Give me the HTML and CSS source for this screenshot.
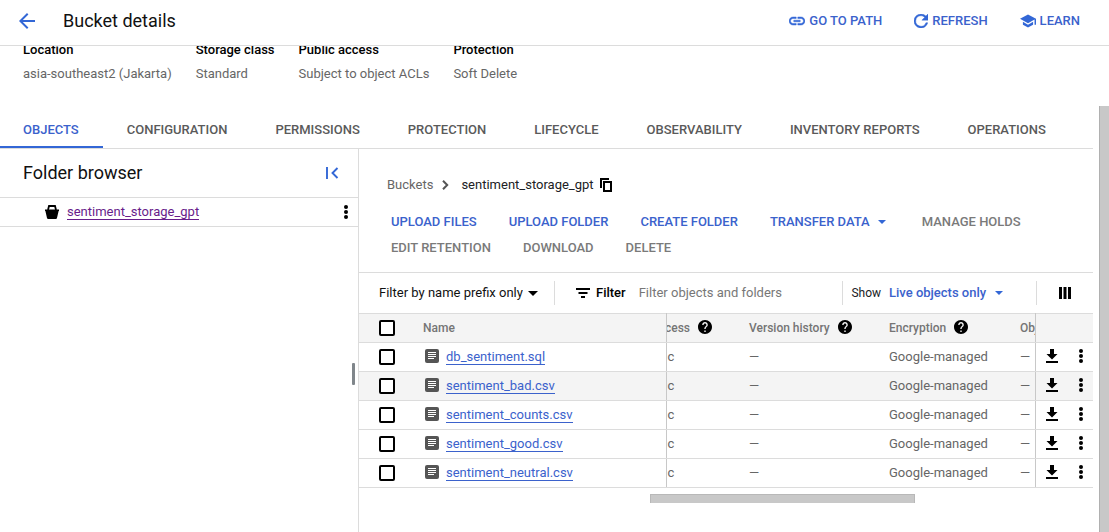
FILE: index.html
```html
<!DOCTYPE html>
<html lang="en">
<head>
<meta charset="utf-8">
<meta name="viewport" content="width=device-width, initial-scale=1">
<title>Bucket details</title>
<link rel="stylesheet" href="styles.css">
</head>
<body>
<svg class="sprite" aria-hidden="true">
  <symbol id="file" viewBox="0 0 14 14"><rect width="14" height="14" rx="2" fill="#555"/><path d="M3 3.500h8M3 5.500h8M3 7.500h8M3 9.500h6" stroke="#fff"/></symbol>
  <symbol id="download" viewBox="0 0 12 14"><path d="M4 0h4v5h3.500L6 10.500 .5 5H4zM0 12h12v2H0z"/></symbol>
  <symbol id="more" viewBox="0 0 4 14"><circle cx="2" cy="2" r="2"/><circle cx="2" cy="7" r="2"/><circle cx="2" cy="12" r="2"/></symbol>
  <symbol id="help" viewBox="2 2 20 20"><path d="M12 2C6.480 2 2 6.480 2 12s4.480 10 10 10 10-4.480 10-10S17.520 2 12 2zm1 17h-2v-2h2v2zm2.070-7.750-.9.920C13.450 12.900 13 13.500 13 15h-2v-.5c0-1.100.45-2.100 1.170-2.830l1.240-1.260c.37-.36.59-.86.59-1.410 0-1.100-.9-2-2-2s-2 .9-2 2H8c0-2.210 1.790-4 4-4s4 1.790 4 4c0 .88-.36 1.680-.93 2.250z"/></symbol>
  <symbol id="caret" viewBox="0 0 10 5"><path d="M0 0h10L5 5z"/></symbol>
</svg>
<header class="topbar">
  <button class="icon-btn blue" aria-label="Back"><svg width="16" height="16" viewBox="4 4 16 16"><path d="M20 11H7.830l5.590-5.590L12 4l-8 8 8 8 1.410-1.410L7.830 13H20z"/></svg></button>
  <h1>Bucket details</h1>
  <div class="top-actions">
    <button class="text-btn"><svg width="16" height="10" viewBox="2 6 20 12"><path d="M3.900 12c0-1.710 1.390-3.100 3.100-3.100h4V7H7c-2.760 0-5 2.240-5 5s2.240 5 5 5h4v-1.900H7c-1.710 0-3.100-1.390-3.100-3.100zM8 13h8v-2H8v2zm9-6h-4v1.900h4c1.710 0 3.100 1.390 3.100 3.100s-1.390 3.100-3.100 3.100h-4V17h4c2.760 0 5-2.240 5-5s-2.240-5-5-5z" stroke="#3367d6" stroke-width=".6"/></svg>GO TO PATH</button>
    <button class="text-btn"><svg width="14" height="14" viewBox="4 4 16 16"><path d="M17.650 6.350A7.960 7.960 0 0 0 12 4a8 8 0 1 0 7.730 10h-2.080A6 6 0 1 1 12 6c1.660 0 3.140.69 4.220 1.780L13 11h7V4z" stroke="#3367d6" stroke-width=".5"/></svg>REFRESH</button>
    <button class="text-btn"><svg width="16" height="14" viewBox="1 3 22 18"><path d="M5 13.180v4L12 21l7-3.820v-4L12 17zM12 3 1 9l11 6 9-4.910V17h2V9z"/></svg>LEARN</button>
  </div>
</header>
<div class="page">
<main class="content">
  <dl class="facts">
    <div><dt>Location</dt><dd>asia-southeast2 (Jakarta)</dd></div>
    <div><dt>Storage class</dt><dd>Standard</dd></div>
    <div><dt>Public access</dt><dd>Subject to object ACLs</dd></div>
    <div><dt>Protection</dt><dd>Soft Delete</dd></div>
  </dl>
  <nav class="tabs">
    <a href="#" class="active">OBJECTS</a><a href="#">CONFIGURATION</a><a href="#">PERMISSIONS</a><a href="#">PROTECTION</a><a href="#">LIFECYCLE</a><a href="#">OBSERVABILITY</a><a href="#">INVENTORY REPORTS</a><a href="#">OPERATIONS</a>
  </nav>
  <div class="split">
    <aside class="folders">
      <div class="folders-head"><h2>Folder browser</h2><button class="icon-btn blue" aria-label="Collapse"><svg width="13" height="12" viewBox="0 0 13 12"><path d="M1 0v12M11.500 1 6.500 6l5 5" fill="none" stroke="#3367d6" stroke-width="1.900"/></svg></button></div>
      <div class="folder-row"><svg width="14" height="14" viewBox="0 0 14 14"><path d="M3 5 4 1h6l1 4" fill="none" stroke="#000" stroke-width="1.800"/><path d="M0 4.500h14v1.500h-.4L12 13q-.2 1-1.200 1H3.200Q2.200 14 2 13L.4 6H0z"/></svg><a class="link visited" href="#">sentiment_storage_gpt</a><button class="icon-btn more" aria-label="More"><svg width="4" height="14"><use href="#more"/></svg></button></div>
      <div class="handle"></div>
    </aside>
    <section class="objects">
      <div class="crumbs"><a href="#">Buckets</a><svg width="7" height="10" viewBox="0 0 7 10"><path d="m1 .8 4.200 4.200L1 9.200" fill="none" stroke="#555" stroke-width="2"/></svg><span>sentiment_storage_gpt</span><button class="icon-btn" aria-label="Copy"><svg width="12" height="14" viewBox="0 0 12 14"><path d="M1 10V1h8" fill="none" stroke="#000" stroke-width="2"/><path d="M4 4h7v9H4z" fill="none" stroke="#000" stroke-width="2"/></svg></button></div>
      <div class="actions">
        <button class="text-btn">UPLOAD FILES</button><button class="text-btn">UPLOAD FOLDER</button><button class="text-btn">CREATE FOLDER</button><button class="text-btn menu">TRANSFER DATA<svg width="8" height="4"><use href="#caret"/></svg></button><button class="text-btn" disabled>MANAGE HOLDS</button><button class="text-btn" disabled>EDIT RETENTION</button><button class="text-btn" disabled>DOWNLOAD</button><button class="text-btn" disabled>DELETE</button>
      </div>
      <div class="filterbar">
        <div class="scope"><select aria-label="Filter scope"><option>Filter by name prefix only</option></select><svg width="10" height="5"><use href="#caret"/></svg></div>
        <div class="search"><svg width="14" height="10" viewBox="0 0 14 10"><path d="M0 1h14M2.500 5h9M5 9h4" stroke="#000" stroke-width="2"/></svg><label for="q">Filter</label><input id="q" type="text" placeholder="Filter objects and folders"></div>
        <div class="show"><label for="show">Show</label><select id="show"><option>Live objects only</option></select><svg width="8" height="4"><use href="#caret"/></svg></div>
        <button class="icon-btn columns" aria-label="Columns"><svg width="12" height="12"><path d="M0 0h3v12H0zM4.500 0h3v12h-3zM9 0h3v12H9z"/></svg></button>
      </div>
      <table class="grid">
        <colgroup><col class="c-check"><col><col class="c-access"><col class="c-version"><col class="c-enc"><col class="c-obj"><col class="c-act"></colgroup>
        <thead><tr><th><input type="checkbox" aria-label="Select all"></th><th>Name</th><th class="access"><div>Public access<svg width="14" height="14"><use href="#help"/></svg></div></th><th><div>Version history<svg width="14" height="14"><use href="#help"/></svg></div></th><th><div>Encryption<svg width="14" height="14"><use href="#help"/></svg></div></th><th class="clip">Object retention</th><th class="act"></th></tr></thead>
        <tbody>
          <tr><td><input type="checkbox" aria-label="Select db_sentiment.sql"></td><td><div class="name"><svg width="14" height="14"><use href="#file"/></svg><a class="link" href="#">db_sentiment.sql</a></div></td><td class="access">c</td><td>—</td><td>Google-managed</td><td>—</td><td class="act"><div><button class="icon-btn" aria-label="Download"><svg width="12" height="14"><use href="#download"/></svg></button><button class="icon-btn" aria-label="More"><svg width="4" height="14"><use href="#more"/></svg></button></div></td></tr>
          <tr class="hover"><td><input type="checkbox" aria-label="Select sentiment_bad.csv"></td><td><div class="name"><svg width="14" height="14"><use href="#file"/></svg><a class="link" href="#">sentiment_bad.csv</a></div></td><td class="access">c</td><td>—</td><td>Google-managed</td><td>—</td><td class="act"><div><button class="icon-btn" aria-label="Download"><svg width="12" height="14"><use href="#download"/></svg></button><button class="icon-btn" aria-label="More"><svg width="4" height="14"><use href="#more"/></svg></button></div></td></tr>
          <tr><td><input type="checkbox" aria-label="Select sentiment_counts.csv"></td><td><div class="name"><svg width="14" height="14"><use href="#file"/></svg><a class="link" href="#">sentiment_counts.csv</a></div></td><td class="access">c</td><td>—</td><td>Google-managed</td><td>—</td><td class="act"><div><button class="icon-btn" aria-label="Download"><svg width="12" height="14"><use href="#download"/></svg></button><button class="icon-btn" aria-label="More"><svg width="4" height="14"><use href="#more"/></svg></button></div></td></tr>
          <tr><td><input type="checkbox" aria-label="Select sentiment_good.csv"></td><td><div class="name"><svg width="14" height="14"><use href="#file"/></svg><a class="link" href="#">sentiment_good.csv</a></div></td><td class="access">c</td><td>—</td><td>Google-managed</td><td>—</td><td class="act"><div><button class="icon-btn" aria-label="Download"><svg width="12" height="14"><use href="#download"/></svg></button><button class="icon-btn" aria-label="More"><svg width="4" height="14"><use href="#more"/></svg></button></div></td></tr>
          <tr><td><input type="checkbox" aria-label="Select sentiment_neutral.csv"></td><td><div class="name"><svg width="14" height="14"><use href="#file"/></svg><a class="link" href="#">sentiment_neutral.csv</a></div></td><td class="access">c</td><td>—</td><td>Google-managed</td><td>—</td><td class="act"><div><button class="icon-btn" aria-label="Download"><svg width="12" height="14"><use href="#download"/></svg></button><button class="icon-btn" aria-label="More"><svg width="4" height="14"><use href="#more"/></svg></button></div></td></tr>
        </tbody>
      </table>
      <div class="hscroll"><div class="hthumb"></div></div>
    </section>
  </div>
</main>
<div class="vscroll"></div>
</div>
</body>
</html>
```
FILE: styles.css
```css
* { box-sizing: border-box; }
body {
  margin: 0;
  height: 100vh;
  display: flex;
  flex-direction: column;
  overflow: hidden;
  background: #fff;
  color: #202124;
  font: 13px/18px Roboto, sans-serif;
}
h1, h2, dl, dd { margin: 0; font-weight: 400; }
h1, h2 { font-size: 18px; line-height: 24px; color: #111; }
svg { display: block; flex: none; }
a { color: inherit; text-decoration: none; }
button, select, input { font: inherit; color: inherit; background: none; border: 0; padding: 0; margin: 0; outline: 0; }
select { appearance: none; }
.sprite { position: absolute; width: 0; height: 0; }
.icon-btn { display: flex; align-items: center; }
.blue { fill: #3367d6; }

.topbar {
  flex: none;
  height: 46px;
  display: flex;
  align-items: center;
  padding: 0 28px 4px 19px;
  border-bottom: 1px solid #dcdcdc;
}
.topbar h1 { margin-left: 28px; }
.top-actions { display: flex; gap: 32px; margin-left: auto; padding-right: 1px; }
.text-btn {
  display: flex;
  align-items: center;
  gap: 4px;
  color: #3b62cc;
  fill: #3367d6;
  font-weight: 500;
  line-height: 18px;
  white-space: nowrap;
}
.text-btn:disabled { color: #7a7a7a; }

.page { flex: 1; display: flex; min-height: 0; }
.content { flex: 1; min-width: 0; display: flex; flex-direction: column; }
.vscroll { flex: none; width: 10px; margin: 60px 0 0 6px; background: #c8c8c8; border-left: 1px solid #b0b0b0; }

.facts { display: flex; flex: none; gap: 24px; height: 65px; padding-left: 23px; overflow: hidden; }
.facts div { margin-top: -5px; }
.facts dt { font-weight: 500; color: #000; margin-bottom: 6px; }
.facts dd { color: #666; }

.tabs { display: flex; flex: none; height: 38px; border-bottom: 1px solid #dcdcdc; }
.tabs a { padding: 10px 24px 0; height: 37px; font-weight: 500; color: #5a5a5a; white-space: nowrap; }
.tabs a:first-child { padding-left: 23px; }
.tabs .active { color: #3b62cc; border-bottom: 2px solid #3367d6; }

.split { flex: 1; display: flex; min-height: 0; }
.folders { position: relative; flex: none; width: 359px; border-right: 1px solid #dcdcdc; }
.folders-head { display: flex; align-items: center; justify-content: space-between; height: 49px; padding: 0 19px 0 23px; border-bottom: 1px solid #dcdcdc; }
.folder-row { display: flex; align-items: center; height: 29px; padding: 0 10px 0 45px; border-bottom: 1px solid #dcdcdc; }
.folder-row .link { margin: 0 auto 0 8px; }
.handle { position: absolute; right: 3px; top: 214px; width: 3px; height: 22px; background: #80868b; border-radius: 1px; }
.link { color: #3b62cc; line-height: 15px; border-bottom: 1px solid #3b62cc; }
.visited { color: #681d8b; border-color: #681d8b; }

.objects { flex: 1; min-width: 0; }
.crumbs { display: flex; align-items: center; height: 18px; margin: 27px 28px 0; }
.crumbs a { color: #666; }
.crumbs svg { margin: 0 12px 0 9px; }
.crumbs button svg { margin: 0 0 0 6px; }
.actions { display: flex; flex-wrap: wrap; gap: 8px 32px; padding: 19px 32px 15px; border-bottom: 1px solid #dcdcdc; }
.menu { gap: 8px; padding-right: 4px; }
.filterbar { display: flex; align-items: center; height: 40px; padding: 0 22px 0 20px; }
.filterbar > * { height: 24px; display: flex; align-items: center; }
.scope { fill: #000; gap: 5px; padding-right: 16px; color: #111; }
.search { flex: 1; min-width: 0; border: solid #dcdcdc; border-width: 0 1px; padding-left: 21px; }
.search label { font-weight: 500; color: #000; margin: 0 13px 0 6px; }
.search input { flex: 1; min-width: 0; }
.search input::placeholder { color: #777; opacity: 1; }
.show { padding-left: 8px; fill: #3367d6; gap: 8px; }
.show label { font-size: 12px; }
.show select { font-weight: 500; color: #3b62cc; }
.columns { margin-left: 33px; border-left: 1px solid #dcdcdc; padding-left: 22px; }

.grid { width: 100%; table-layout: fixed; border-collapse: collapse; color: #666; border-top: 1px solid #dcdcdc; }
.grid th, .grid td { height: 29px; padding: 0 0 0 8px; text-align: left; vertical-align: middle; border-bottom: 1px solid #dcdcdc; white-space: nowrap; line-height: 16px; }
.grid th { font-size: 12px; font-weight: 500; color: #757575; }
.grid th:first-child, .grid td:first-child { padding-left: 20px; }
.grid thead tr, .grid .hover { background: #f4f4f4; }
.c-check { width: 56px; }
.c-access { width: 75px; }
.c-version { width: 140px; }
.c-enc { width: 131px; }
.c-obj { width: 23px; }
.c-act { width: 58px; }
.grid th div { display: flex; align-items: center; gap: 8px; fill: #000; }
.grid .access { border-left: 1px solid #c8c8c8; padding-left: 1px; overflow: hidden; }
.grid th.access { padding-left: 0; }
.grid th.access div { justify-content: flex-end; padding-right: 29px; overflow: hidden; }
.grid .clip { overflow: hidden; }
.grid .act { border-left: 1px solid #c8c8c8; padding: 0 10px; }
.act div { display: flex; justify-content: space-between; padding-bottom: 2px; }
.name { display: flex; align-items: center; gap: 7px; padding-left: 2px; }
.name svg, .grid th svg { margin-bottom: 2px; }
.grid input { appearance: none; display: block; width: 16px; height: 16px; border: 2px solid #000; border-radius: 2px; background: #fff; }
.hscroll { padding: 6px 178px 0 291px; }
.hthumb { height: 9px; background: #c8c8c8; border: solid #b8b8b8; border-width: 1px 1px 0; }
```
